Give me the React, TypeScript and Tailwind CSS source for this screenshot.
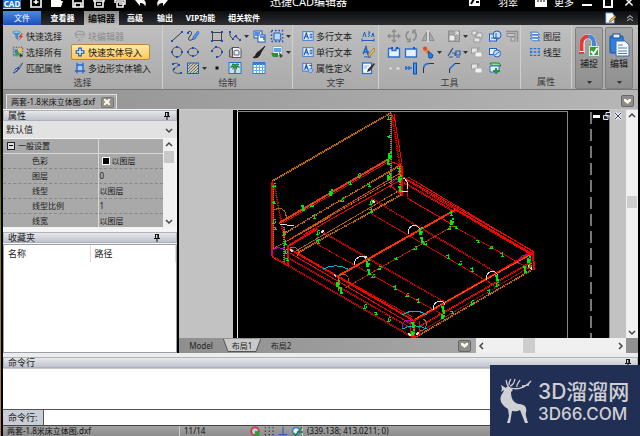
import type { ReactNode } from "react";

const BLUE = "#1f5fc4";
const GREY = "#8d8d8d";

function Svg({ children, size = "w-[14px] h-[14px]" }: { children: ReactNode; size?: string }) {
  return (
    <svg viewBox="0 0 14 14" className={`${size} shrink-0`} fill="none" aria-hidden="true">
      {children}
    </svg>
  );
}

function Caret() {
  return (
    <svg viewBox="0 0 5 3" className="h-[3px] w-[5px] shrink-0" aria-hidden="true">
      <path d="M0 0h5L2.5 3z" fill="#333" />
    </svg>
  );
}

function Dots({ pts }: { pts: number[][] }) {
  return (
    <>
      {pts.map(([x, y]) => (
        <rect key={`${x}-${y}`} x={x - 1} y={y - 1} width="2" height="2" fill="#1550c8" />
      ))}
    </>
  );
}

const icons: Record<string, ReactNode> = {
  quick: (
    <>
      <path d="M1 2.500h8.500L6.500 6v5L4.500 9V6z" fill="#3aa0dc" stroke="#1566a8" strokeWidth=".7" />
      <ellipse cx="5.200" cy="2.500" rx="4.200" ry="1.300" fill="#9fd8f5" stroke="#1566a8" strokeWidth=".6" />
      <path d="M11 4 7.500 8.500H10L7 13l6-6h-2.300L13 4z" fill="#e8322c" />
    </>
  ),
  all: (
    <>
      <rect x="1.500" y="1.500" width="11" height="10" stroke="#444" strokeDasharray="1.500 1.500" />
      <rect x="3" y="4" width="5" height="4" fill="#2d74d8" />
      <circle cx="9" cy="5" r="2.300" fill="#f4c430" />
      <path d="m2 11 4-5 4 5z" fill="#2fa336" />
      <path d="m9 8 4 4h-2l-1 2z" fill="#222" />
    </>
  ),
  match: (
    <>
      <path d="m12.500 1-5 5 1.500 1.500z" fill="#8fb8ea" stroke="#27477c" strokeWidth=".8" />
      <path d="M7.500 5.500 9 7.500 6 11l-3.500 2H1l3-5z" fill="#234a93" />
      <path d="M3 11.500 6 8" stroke="#e8eefb" />
    </>
  ),
  block: (
    <>
      <path d="M1 4 4 1.500h6L12 4l-3 1.500H4z" fill="#b8b8b8" stroke={GREY} />
      <path d="m12.500 5-6 5L5 12.500l3-1L13 6z" fill="#ddd" stroke={GREY} />
      <path d="M2 5v3l3 1" stroke={GREY} />
    </>
  ),
  plus: <path d="M5.500 2.500h3v3h3v3h-3v3h-3v-3h-3v-3h3z" fill="#dff0ff" stroke="#1d56ae" strokeWidth="1.300" />,
  poly: (
    <>
      <path d="M4 4h6v6H4z" fill="#aacdf4" />
      <path d="M3.500 1v12M1 10.500h12M10.500 1v12M4 3.500h6" stroke="#1d64cf" strokeWidth="1.500" />
    </>
  ),
  line: (
    <>
      <path d="M2 12 12 3" stroke="#333" />
      <Dots pts={[[2, 12], [12, 3]]} />
    </>
  ),
  sketch: (
    <>
      <path d="M1 4c4-4 6 0 3 3s-1 6 3 3" stroke="#333" />
      <path d="m12 2-5 6v2.500L9 10l4-6z" fill="#4f97ec" stroke="#1a56b2" strokeWidth=".6" />
      <Dots pts={[[2, 4]]} />
    </>
  ),
  rect: (
    <>
      <rect x="2.500" y="3.500" width="9" height="8" stroke="#444" />
      <Dots pts={[[2, 3], [12, 3], [2, 12], [12, 12]]} />
    </>
  ),
  polyline: (
    <>
      <path d="M2 3v4l3 3 2-3 5 4" stroke="#444" />
      <Dots pts={[[2, 3], [5, 10], [8, 7], [12, 11]]} />
    </>
  ),
  insert: (
    <>
      <rect x="2" y="2" width="8" height="7" fill="#d8eaff" stroke={BLUE} />
      <rect x="6" y="6" width="7" height="7" fill="#fff" stroke={BLUE} />
      <path d="M3 4h5M3 6h3M8 8h4v3" stroke="#2670d4" strokeWidth="1.500" />
    </>
  ),
  region: (
    <>
      <path d="M4 4h6c2 3-1 3 1 7H4z" fill="#b8d9fa" stroke={BLUE} />
      <rect x="1.500" y="1.500" width="11" height="11" stroke="#1550c8" strokeWidth="1.500" strokeDasharray="1.500 2" />
    </>
  ),
  circle: (
    <>
      <circle cx="7" cy="7" r="5" stroke="#555" />
      <Dots pts={[[7, 2], [2, 7], [12, 7], [7, 12]]} />
    </>
  ),
  ellipse: (
    <>
      <ellipse cx="7" cy="7" rx="5" ry="4" stroke="#555" />
      <Dots pts={[[7, 3], [2, 7], [12, 7], [7, 11]]} />
    </>
  ),
  arc: (
    <>
      <path d="M2 6c1-5 9-5 10 0 0 3-2 6-5 6" stroke="#555" />
      <Dots pts={[[2, 6], [6, 2], [12, 7], [7, 12]]} />
    </>
  ),
  wipe: (
    <>
      <path d="M4 2.500h7l2 2v8H4z" fill="#eef4ff" stroke="#555" />
      <path d="M1.500 12V5l3-2v9z" fill="#aaa" stroke="#555" />
      <path d="M6 10V6l3-1 2 1v4z" stroke="#666" />
    </>
  ),
  brush: <path d="M13 1 7 6.500l1.500 1.500zM7 6.500C3 8 5 11 1 12.500c4 1 7-1 7.500-4.500z" fill="#222" stroke="#222" />,
  picture: (
    <>
      <rect x="3" y="1.500" width="9" height="9" fill="#fff" stroke="#8aa" />
      <rect x="4" y="3" width="7" height="4" fill="#5aa6ee" />
      <path d="M1 8h7v4H3z" fill="#2c8f35" />
      <path d="m9 7 4 4-3 2z" fill="#444" />
    </>
  ),
  spline: (
    <>
      <path d="M3 3c7-3 6 3 2 4s-2 7 7 5" stroke="#555" />
      <Dots pts={[[3, 3], [9, 4], [4, 8], [11, 12]]} />
    </>
  ),
  hatch: (
    <>
      <rect x="1.500" y="2" width="11" height="10.500" fill="#c9c3b4" stroke="#1f5fc4" />
      <path d="m2 5 3-3M2 8l6-6M2 11l9-9M4 12l8-8M7 12l5-5M10 12l2-2" stroke="#555" strokeWidth=".8" />
    </>
  ),
  point: <rect x="5.500" y="5.500" width="3" height="3" fill="#111" />,
  palm: (
    <>
      <rect x="1" y="1.500" width="12" height="11" fill="#bfe4fa" stroke="#2474c8" />
      <path d="M7 6v6" stroke="#7b4a1d" strokeWidth="1.300" />
      <path d="M7 6C5 3 3 4 2 7l3-1-1 3 3-3 2 3v-3l3 1c-1-3-3-4-5-1z" fill="#128334" />
      <path d="M4 3.500c2-1 3 1 3 2 0-2 2-3 4-2" stroke="#128334" strokeWidth="1.300" />
    </>
  ),
  table: (
    <>
      <rect x="1" y="1.500" width="12" height="11" fill="#fff" stroke="#2e7fd8" />
      <path d="M1 3h12" stroke="#2e7fd8" strokeWidth="2" />
      <path d="M1 6.500h12M1 9.500h12M4.500 3v9M7.500 3v9M10.500 3v9" stroke="#6cacf0" />
    </>
  ),
  mtext: (
    <>
      <rect x="1" y="2" width="12" height="10" fill="#e3efff" stroke="#2c6fd0" />
      <path d="m2.500 10.500 2.500-7 2.500 7M4 8h2.500M9 5h3M9 7h3M9 9h3" stroke="#174fa8" strokeWidth="1.200" />
    </>
  ),
  attr: (
    <>
      <rect x="1" y="1.500" width="10" height="9" fill="#e3efff" stroke="#2c6fd0" />
      <path d="m3 9 2-6 2 6M4 7h2.500M8.500 4H11" stroke="#174fa8" strokeWidth="1.200" />
      <circle cx="10" cy="10" r="2.500" fill="#9fc3f5" stroke="#1f5fc4" strokeDasharray="1.200 .8" />
    </>
  ),
  fit: (
    <>
      <path d="M1 11.500h12M1 9.500v3M13 9.500v3" stroke="#1f5fc4" />
      <path d="m2 8 1.500-5L5 8M7 3h2L7.500 5.500C9 5 9 8 7 7.500M10.500 8 12 4l1 4" stroke="#1f5fc4" />
    </>
  ),
  style: (
    <>
      <path d="m2 9 3-7 2 8M3 7h5" stroke="#1f5fc4" strokeWidth="1.500" />
      <path d="m13 3-5 6-1 3 2-1 5-6z" fill="#f5c24a" stroke="#7b5a16" strokeWidth=".6" />
      <path d="M3 12c3-1 4 1 7 0" stroke="#1f5fc4" />
    </>
  ),
  edit: (
    <>
      <rect x="1.500" y="2" width="9" height="10.500" fill="#fff" stroke="#2c6fd0" strokeWidth="1.300" />
      <path d="M3 5h5M3 7h3" stroke="#7fb0ef" />
      <path d="m13 2-6 6-1 3 3-1 5-7z" fill="#333" />
    </>
  ),
  move: <path d="M7 1v12M1 7h12M5 3l2-2 2 2M5 11l2 2 2-2M3 5 1 7l2 2M11 5l2 2-2 2" stroke={GREY} strokeWidth="1.300" />,
  rotate: (
    <>
      <path d="M5 2.500C1 4 1 10 6 11.500M9 11.500c4-2 4-7 1-9" stroke={GREY} strokeWidth="1.600" />
      <path d="M6 9v3.500H3M9 5V1.500h3" stroke={GREY} strokeWidth="1.300" />
    </>
  ),
  mirror: (
    <>
      <path d="M5.500 3v8.500H1zM8.500 3v8.500H13z" fill="#aaa" stroke={GREY} />
      <path d="M7 1v12" stroke="#eee" />
    </>
  ),
  scale: (
    <>
      <rect x="1.500" y="2" width="11" height="10.500" fill="#aaa" stroke={GREY} />
      <rect x="2" y="6" width="6" height="6" fill="#eee" stroke={GREY} />
      <path d="m8 6 3-3M8 3h3v3" stroke="#eee" />
    </>
  ),
  group: <path d="M2 2h5v4H2zM6 4h6v5H6zM4 8h6v5H4z" fill="#e4e4e4" stroke="#999" />,
  bring: (
    <>
      <rect x="1.500" y="3" width="6" height="5" fill="#e4e4e4" stroke="#999" />
      <rect x="5" y="7" width="7" height="5" fill="#f2f2f2" stroke="#aaa" />
      <path d="M9 2v3" stroke="#999" />
    </>
  ),
  explode: (
    <>
      <rect x="1.500" y="5" width="7" height="7" fill="#d8e9ff" stroke={BLUE} />
      <circle cx="9" cy="6" r="4" fill="#c7defa" stroke={BLUE} />
      <path d="M3 9h8M8 4v6" stroke={BLUE} />
    </>
  ),
  clip: (
    <>
      <rect x="1.500" y="3.500" width="7" height="6" fill="#e6f1ff" stroke={BLUE} />
      <circle cx="9" cy="8.500" r="3.500" fill="#cfe2fa" stroke={BLUE} />
      <path d="m7 10 4-3" stroke={BLUE} />
    </>
  ),
  align: (
    <>
      <path d="M1 2.500h12M12.500 2v11" stroke={GREY} strokeWidth="1.300" />
      <path d="M2 4.500h8v3H2zM6 8h4v4H6z" fill="#c5c5c5" stroke={GREY} />
    </>
  ),
  joinA: (
    <>
      <path d="M1.500 3.500H5v2h4v-2h3.500V12h-11z" fill="#e6f1ff" stroke="#2c6fd0" strokeWidth="1.400" />
      <Dots pts={[[5, 3], [10, 3]]} />
    </>
  ),
  joinB: (
    <>
      <path d="M1.500 4h11v8h-11z" fill="#e6f1ff" stroke="#2c6fd0" strokeWidth="1.400" />
      <Dots pts={[[10, 3]]} />
    </>
  ),
  paint: (
    <>
      <path d="m2 5 3-3 4 4-3 3z" fill="#f28b2d" />
      <circle cx="4" cy="3.500" r="2" fill="#d94a28" />
      <path d="m7 6 5 4-1 3H8z" fill="#2d7be0" stroke="#174fa8" />
    </>
  ),
  text: (
    <>
      <path d="M1 11 6 3M2 12h4M5 8h3v3M9 6h4v4H9zM9 12h4" stroke="#2c5fb4" strokeWidth="1.200" />
      <path d="m2 10 3-6" stroke="#555" />
    </>
  ),
  breakA: (
    <>
      <rect x="2" y="6" width="3" height="3" fill="#ddd" stroke="#aaa" strokeWidth=".6" />
      <rect x="9" y="6" width="4" height="3" fill="#ddd" stroke="#aaa" strokeWidth=".6" />
    </>
  ),
  extend: (
    <>
      <path d="M1 7h7M2 5v4M5 5v4" stroke="#2c6fd0" strokeWidth="1.500" />
      <rect x="9.500" y="2" width="3" height="11" fill="#3e95f2" stroke="#1550a8" />
    </>
  ),
  fillet: (
    <>
      <path d="M2.500 12V7C3 4 5 2.500 8 2.500h5" stroke="#333" />
      <path d="M2.500 7C3 4 5 2.500 8 2.500" stroke="#2474dc" strokeWidth="1.600" />
    </>
  ),
  chamfer: (
    <>
      <path d="M2.500 12V8L8 2.500h5" stroke="#333" />
      <path d="M2.500 8 8 2.500" stroke="#2474dc" strokeWidth="1.600" />
    </>
  ),
  green: (
    <>
      <path d="M2 2h9l2 3H4z" fill="#93dc8e" stroke="#1c8430" />
      <path d="M2 5h9v6H2z" fill="#eaf4ff" stroke="#2c6fd0" />
      <path d="M8 7v6M5 10h7" stroke="#1c9a38" strokeWidth="2" />
    </>
  ),
  layers: <path d="M1.500 2.500h8l3 3h-8zM1.500 6h8l3 3h-8zM1.500 9.500h8l3 3h-8z" fill="#edf5ff" stroke="#2c6fd0" />,
  ltype: (
    <>
      <path d="M1 3h12M1 7h12M1 11h12" stroke="#2474dc" strokeWidth="1.600" strokeDasharray="3 1.500" />
      <path d="M2 3v8M12 3v8" stroke="#2474dc" strokeDasharray="1 1" />
    </>
  ),
  pen: (
    <>
      <path d="M2 1h8l2 3v9H2z" fill="#fff" stroke="#356fc4" />
      <path d="m13 4-6 5-1 3 3-1 5-5z" fill="#f2b43c" stroke="#444" strokeWidth=".6" />
    </>
  ),
};

function Tool({ name, label, caret = false }: { name: string; label: string; caret?: boolean }) {
  return (
    <button type="button" aria-label={label} className="flex h-4 items-center gap-0.5 pl-0.5">
      <Svg>{icons[name]}</Svg>
      {caret && <Caret />}
    </button>
  );
}

function TextTool({ name, label, look = "border-transparent text-[#222]" }: { name: string; label: string; look?: string }) {
  return (
    <button type="button" className={`flex h-4 items-center gap-0.5 whitespace-nowrap rounded-[2px] border pl-0.5 ${look}`}>
      <Svg size="w-[12px] h-[12px]">{icons[name]}</Svg>
      {label}
    </button>
  );
}

function Group({ title, width, children }: { title: string; width: string; children: ReactNode }) {
  return (
    <section aria-label={title} className={`flex shrink-0 flex-col border-r border-[#d0d0d0] pt-[3px] ${width}`}>
      <div className="flex h-12">{children}</div>
      <h2 className="text-center leading-[14px] text-[#3a3a3a]">{title}</h2>
    </section>
  );
}

type T = [string, string, boolean?];
const drawTools: (T | null)[] = [
  ["line", "直线"], ["sketch", "手绘"], ["rect", "矩形"], ["polyline", "多段线", true], ["insert", "插入块"], ["region", "面域", true],
  ["circle", "圆"], ["ellipse", "椭圆"], ["arc", "圆弧"], ["wipe", "遮罩"], ["brush", "画笔"], ["picture", "图片", true],
  ["spline", "样条曲线"], ["hatch", "填充", true], ["point", "点"], ["palm", "图像"], ["table", "表格"], null,
];
const editTools: (T | null)[] = [
  ["move", "移动"], ["rotate", "旋转"], ["mirror", "镜像"], ["scale", "缩放", true], ["group", "成组"], ["explode", "分解"], ["align", "对齐"],
  ["joinA", "打断"], ["joinB", "合并"], ["paint", "格式刷", true], ["text", "文字", true], ["bring", "前置"], ["clip", "剪裁"], null,
  ["breakA", "断点"], ["extend", "延伸"], ["fillet", "圆角"], ["chamfer", "倒角"], ["bring", "后置"], ["green", "输出块"], null,
];

function ToolGrid({ tools, cols }: { tools: (T | null)[]; cols: string }) {
  return (
    <div className={`grid grid-rows-3 ${cols}`}>
      {tools.map((t, i) => (t ? <Tool key={i} name={t[0]} label={t[1]} caret={t[2]} /> : <span key={i} />))}
    </div>
  );
}

function TitleBar() {
  return (
    <header className="flex h-[11px] shrink-0 items-start justify-between overflow-hidden bg-black text-white">
      <div className="flex h-[9px] items-end gap-[7px] overflow-hidden">
        <span className="mr-px flex h-[9px] w-[18px] items-center justify-center border-b border-[#cde] bg-[#1b6fd0] text-[8px] font-bold leading-[8px]">
          CAD
        </span>
        {[
          ["新建", <path key="p" d="M2 2h10v10H2zM7 4v5M4.500 7h5" stroke="#fff" strokeWidth="1.600" />],
          ["打开", <path key="p" d="M1 12V2h4l1 2h5v2h2l-2 6z" fill="#fff" />],
          ["保存", <path key="p" d="M2 1v11h10V1M4 12V8h6v4" stroke="#fff" strokeWidth="1.600" />],
          ["另存为", <path key="p" d="M2 2v4h10V2M3 6v6h8V6M5 9h4" stroke="#fff" strokeWidth="1.600" />],
          ["打印", <path key="p" d="M2 8V5h10v4h-2M4 7h6v5H4zM6 9h3" stroke="#fff" strokeWidth="1.500" />],
          ["撤销", <path key="p" d="m1 5 5-4v3c5 0 7 3 5 8 0-3-2-4-5-4v3z" fill="#fff" />],
          ["重做", <path key="p" d="m13 5-5-4v3c-5 0-7 3-5 8 0-3 2-4 5-4v3z" fill="#fff" />],
        ].map(([label, art]) => (
          <button key={label as string} type="button" aria-label={label as string} className="shrink-0">
            <Svg>{art}</Svg>
          </button>
        ))}
      </div>
      <h1 className="-mt-[4px] whitespace-nowrap pr-5 text-[11px] leading-[12px]">迅捷CAD编辑器</h1>
      <div className="flex h-[8px] items-end gap-2 overflow-hidden pr-1 text-[10px] leading-[12px]">
        <span className="mr-2">
          <Svg>
            <path d="M1 1h11v11H1z" fill="#fff" />
            <path d="M3 10 6 5M8 8h3" stroke="#000" strokeWidth="2" />
          </Svg>
        </span>
        <span className="mr-2">羽翠</span>
        <span className="flex items-end gap-1.5">
          <Svg>
            <path d="M1 1h12v12H1z" fill="#fff" />
            <path d="M4 6v2M7 6v2M10 6v2" stroke="#000" />
          </Svg>
          更多
        </span>
        <span className="flex h-[8px] items-end gap-[11px]">
          <button type="button" aria-label="最小化" className="h-1 w-[10px] self-center border-b-2 border-white" />
          <button type="button" aria-label="最大化" className="h-[10px] w-[10px] border-2 border-white" />
          <button type="button" aria-label="关闭">
            <Svg size="w-[10px] h-[12px]">
              <path d="m2 2 10 10M12 2 2 12" stroke="#fff" strokeWidth="2" />
            </Svg>
          </button>
        </span>
      </div>
    </header>
  );
}

function MenuTabs() {
  const tab = "h-full whitespace-nowrap text-white";
  return (
    <nav className="flex h-[14px] shrink-0 items-center bg-gradient-to-b from-[#0c0d0f] to-[#2d2f33] text-[8px] font-bold leading-none">
      <button type="button" className="h-full w-[38px] bg-gradient-to-b from-[#4b8ae8] to-[#1a4fb5] font-normal text-white">文件</button>
      <button type="button" className={`${tab} w-[43px]`}>查看器</button>
      <button type="button" aria-current="page" className="h-full w-[35px] whitespace-nowrap bg-gradient-to-b from-[#8a8a8a] to-[#bdbdbd] text-[9px] text-[#111]">编辑器</button>
      <button type="button" className={`${tab} w-8`}>高级</button>
      <button type="button" className={`${tab} w-7`}>输出</button>
      <button type="button" className={`${tab} w-[43px]`}>VIP功能</button>
      <button type="button" className={`${tab} w-11`}>相关软件</button>
      <div className="ml-auto flex items-center gap-1 pr-1">
        <button type="button" aria-label="主题">
          <Svg size="w-[12px] h-[12px]">{icons.pen}</Svg>
        </button>
        <button type="button" aria-label="折叠功能区" className="pl-1.5">
          <Svg size="w-[8px] h-[8px]">
            <path d="m2 7 5-4 5 4M2 12l5-4 5 4" stroke="#aaa" strokeWidth="1.800" />
          </Svg>
        </button>
      </div>
    </nav>
  );
}

function BigButton({ label, children }: { label: string; children: ReactNode }) {
  return (
    <button type="button" className="flex h-[62px] w-7 shrink-0 flex-col items-center rounded-[2px] border border-[#7f7f7f] bg-gradient-to-b from-[#a6a6a6] to-[#8f8f8f] pt-[5px] text-[#111]">
      <svg viewBox="0 0 22 24" className="h-6 w-[22px]" fill="none" aria-hidden="true">{children}</svg>
      <span className="leading-[14px]">{label}</span>
      <span className="mt-auto pb-1"><Caret /></span>
    </button>
  );
}

function Ribbon() {
  return (
    <div className="flex h-[65px] shrink-0 overflow-hidden border-b border-[#777] bg-gradient-to-b from-[#bfbfbf] to-[#aaaaaa] text-[9px] leading-none">
      <Group title="选择" width="w-[160px]">
        <div className="flex w-[68px] flex-col pl-[6px]">
          <TextTool name="quick" label="快速选择" />
          <TextTool name="all" label="选择所有" />
          <TextTool name="match" label="匹配属性" />
        </div>
        <div className="flex w-[79px] flex-col">
          <TextTool name="block" label="块编辑器" look="border-transparent text-[#8a8a8a]" />
          <TextTool name="plus" label="快速实体导入" look="border-[#b98a2f] bg-gradient-to-b from-[#ffe9a8] to-[#fdc756] text-[#111]" />
          <TextTool name="poly" label="多边形实体输入" />
        </div>
      </Group>
      <Group title="绘制" width="w-[130px]">
        <div className="pl-[5px]">
          <ToolGrid tools={drawTools} cols="grid-cols-[16px_24px_18px_24px_18px_22px]" />
        </div>
      </Group>
      <Group title="文字" width="w-[86px]">
        <div className="flex w-[66px] flex-col pl-[6px]">
          <TextTool name="mtext" label="多行文本" />
          <TextTool name="mtext" label="单行文本" />
          <TextTool name="attr" label="属性定义" />
        </div>
        <div className="flex flex-col">
          <Tool name="fit" label="文字宽度" />
          <Tool name="style" label="文字样式" />
          <Tool name="edit" label="编辑文字" />
        </div>
      </Group>
      <Group title="工具" width="w-[142px]">
        <div className="pl-[6px]">
          <ToolGrid tools={editTools} cols="grid-cols-[17px_17px_26px_23px_18px_17px_16px]" />
        </div>
      </Group>
      <Group title="属性" width="w-[51px]">
        <div className="flex flex-col pl-[5px]">
          <TextTool name="layers" label="图层" />
          <TextTool name="ltype" label="线型" />
        </div>
      </Group>
      <div className="flex gap-0.5 pl-[3px] pt-0.5">
        <BigButton label="捕捉">
          <path d="M4 20V11C4 1 16 1 16 11v7" stroke="#fff" strokeWidth="5" />
          <path d="M3.500 18V11c0-5 3-7.500 6.500-7.500" stroke="#e23b3b" strokeWidth="4" />
          <path d="M10 3.500c4 0 6 3 6 7.500v5" stroke="#4a86d8" strokeWidth="4" />
          <path d="M1 20h5" stroke="#e23b3b" strokeWidth="2" />
          <rect x="11.500" y="13.500" width="9" height="9" fill="#2f9e34" stroke="#d5f0d5" />
          <path d="m13 18 2.500 3 4-6" stroke="#fff" strokeWidth="2" />
        </BigButton>
        <BigButton label="编辑">
          <rect x="2" y="3" width="13" height="17" rx="1" fill="#3380dc" stroke="#174f9f" />
          <rect x="5" y="1" width="7" height="4" fill="#e8f1fc" stroke="#174f9f" />
          <path d="M8 8h9l4 4v11H8z" fill="#f7fbff" stroke="#3b6fb5" />
          <path d="M10 12h5M10 15h9M10 18h9M10 20.500h9" stroke="#5b7ca8" />
        </BigButton>
      </div>
    </div>
  );
}

function Chevron({ label }: { label: string }) {
  return (
    <button type="button" aria-label={label} className="flex h-3 w-[13px] shrink-0 items-center justify-center rounded-[2px] border border-[#666] bg-[#8c8c8c]">
      <svg viewBox="0 0 7 5" className="h-[5px] w-[7px]" aria-hidden="true">
        <path d="M0 0h2l1.500 1.500L5 0h2v2L3.500 5 0 2z" fill="#fffbe0" />
      </svg>
    </button>
  );
}

function Pin() {
  return (
    <button type="button" aria-label="固定面板">
      <svg viewBox="0 0 6 8" className="h-2 w-1.5" aria-hidden="true">
        <path d="M1 .5h4M1.500 .5v4M4.500 .5v4M3.800 .5v4M0 4.500h6M3 5v3" stroke="#111" fill="none" />
      </svg>
    </button>
  );
}

function PanelHead({ title, pad = "pr-1.5" }: { title: string; pad?: string }) {
  return (
    <div className={`flex h-[11px] shrink-0 items-center justify-between border border-[#aeb2ba] bg-gradient-to-b from-[#e6e8ec] to-[#bfc3cb] pl-1 leading-none ${pad}`}>
      <h2>{title}</h2>
      <Pin />
    </div>
  );
}

const ARROWS = {
  up: "m1 5 3-3 3 3",
  down: "m1 3 3 3 3-3",
  left: "M5 1 2 4l3 3",
  right: "m3 1 3 3-3 3",
};

function Arrow({ dir }: { dir: keyof typeof ARROWS }) {
  return (
    <svg viewBox="0 0 8 8" className="h-2 w-2 shrink-0" fill="none" aria-hidden="true">
      <path d={ARROWS[dir]} stroke="#444" strokeWidth="1.500" />
    </svg>
  );
}

const props: [string, string][] = [
  ["色彩", "以图层"],
  ["图层", "0"],
  ["线型", "以图层"],
  ["线型比例", "1"],
  ["线宽", "以图层"],
];

function SidePanels() {
  return (
    <aside className="flex w-[174px] shrink-0 flex-col bg-[#f4f4f4] text-[9px] leading-none text-[#1b1b1b]">
      <div className="flex h-[118px] shrink-0 flex-col pt-px">
        <PanelHead title="属性" />
        <div className="flex h-[18px] items-center border-b border-[#f4f4f4] bg-[#e2e2e2] pr-1">
          <label htmlFor="preset" className="sr-only">预设</label>
          <select id="preset" className="min-w-0 flex-1 appearance-none bg-transparent pl-[3px] leading-none">
            <option>默认值</option>
          </select>
          <Arrow dir="down" />
        </div>
        <div className="flex min-h-0 flex-1">
          <div className="min-w-0 flex-1 overflow-hidden bg-[#a9a9a9]">
            <table className="w-full table-fixed border-collapse text-[8px]">
              <thead>
                <tr className="h-[14px] border-b border-[#d8d8d8]">
                  <th scope="col" className="w-[95px] border-r border-[#d8d8d8] pl-1 text-left font-normal">
                    <span className="flex items-center gap-[3px]">
                      <span className="flex h-2 w-2 items-center border border-[#222] bg-[#ddd] px-px">
                        <span className="h-px w-full bg-black" />
                      </span>
                      一般设置
                    </span>
                  </th>
                  <th scope="col" aria-label="值" />
                </tr>
              </thead>
              <tbody>
                {props.map(([k, v], i) => (
                  <tr key={k} className="h-[15px] border-b border-dashed border-[#888]">
                    <th scope="row" className="border-r border-solid border-[#d8d8d8] pl-[29px] text-left font-normal">{k}</th>
                    <td className="pl-px">
                      <span className="flex items-center gap-0.5">
                        {i === 0 && <span className="ml-0.5 h-2 w-2 border border-white bg-black" />}
                        {v}
                      </span>
                    </td>
                  </tr>
                ))}
              </tbody>
            </table>
          </div>
          <div className="mr-0.5 flex w-3 flex-col items-center justify-between bg-[#f0f0f0] py-0.5">
            <Arrow dir="up" />
            <span className="mb-auto mt-0.5 h-3 w-[10px] bg-[#c8c8c8]" />
            <Arrow dir="down" />
          </div>
        </div>
      </div>
      <div className="flex min-h-0 flex-1 flex-col pt-[5px]">
        <PanelHead title="收藏夹" pad="pr-4" />
        <div className="mt-px flex-1 border border-[#9a9fa8] bg-white">
          <table className="w-full table-fixed">
            <thead>
              <tr className="h-[17px] text-left">
                <th scope="col" className="w-[86px] border-r border-[#ddd] pl-1 font-normal">名称</th>
                <th scope="col" className="border-r border-[#ddd] pl-1 font-normal">路径</th>
              </tr>
            </thead>
          </table>
        </div>
      </div>
    </aside>
  );
}

/* x1, y1, x2, y2, colour, width */
const R = "#f80000";
const D = "#c80404";
const O = "#d07010";
type Line = [number, number, number, number, string, number];
const solid: Line[] = [
  [272, 180, 272, 256, R, 1], [271, 181, 271, 255, R, 1],
  [394, 113, 402, 163, R, 1], [391, 112, 396, 122, R, 1],
  [279, 222, 387, 159, "#e63a08", 2], [290, 238, 402, 171, "#d04a08", 1],
  [303, 234, 402, 178, R, 1], [288, 245, 317, 228, R, 2],
  [387, 159, 402, 165, R, 1], [402, 165, 402, 195, R, 2], [391, 185, 402, 194, R, 1],
  [407, 178, 408, 196, R, 1], [403, 176, 533, 250, R, 1], [408, 176, 534, 251, R, 1],
  [453, 207, 532, 253, R, 2], [407, 197, 453, 224, R, 1],
  [455, 209, 338, 275, "#ff3000", 2], [338, 275, 338, 290, O, 1],
  [288, 247, 413, 319, R, 2], [290, 252, 411, 323, R, 1],
  [272, 256, 288, 265, R, 1], [288, 244, 288, 265, R, 2],
  [413, 320, 533, 251, R, 2], [415, 318, 530, 254, "#ff5a00", 1],
  [533, 250, 534, 269, R, 2], [530, 254, 530, 268, R, 1],
  [410, 320, 410, 334, R, 1], [414, 320, 414, 337, R, 2], [419, 320, 419, 333, R, 1],
  [410, 334, 414, 337, R, 1], [414, 337, 421, 332, R, 1],
  [497, 272, 497, 286, R, 1], [443, 299, 443, 313, R, 1],
];
const dotted: Line[] = [
  [272, 180, 391, 112, O, 2], [391, 112, 391, 185, O, 2], [273, 182, 273, 247, O, 1],
  [274, 182, 284, 236, D, 2], [392, 115, 400, 165, D, 2],
  [283, 222, 388, 161, R, 1], [283, 233, 401, 164, O, 2], [287, 240, 402, 174, O, 1],
  [273, 248, 330, 216, O, 1], [297, 252, 403, 193, O, 2], [296, 250, 400, 189, O, 1],
  [400, 165, 400, 193, O, 2], [405, 178, 533, 255, R, 2], [404, 182, 455, 211, R, 2],
  [453, 225, 530, 268, R, 1], [372, 198, 497, 272, D, 2], [372, 213, 497, 286, R, 1],
  [322, 231, 443, 300, D, 2], [317, 243, 443, 314, R, 1],
  [453, 225, 345, 287, "#e83808", 1], [290, 258, 411, 327, D, 2],
  [273, 256, 412, 336, D, 2], [292, 250, 413, 316, R, 1],
  [418, 326, 530, 262, R, 2], [417, 335, 533, 268, O, 2], [420, 331, 530, 266, D, 1],
  [284, 226, 284, 263, O, 2], [371, 198, 371, 213, R, 1], [317, 228, 317, 243, R, 1],
];
const greens: [number, number, number][] = [
  [274, 184, 3], [274, 201, 2], [274, 220, 4], [275, 227, 3], [284, 232, 4], [285, 241, 4], [286, 250, 4], [287, 258, 3],
  [389, 116, 4], [389, 135, 2], [390, 154, 6], [388, 160, 5], [389, 175, 5], [399, 168, 4], [400, 177, 5], [400, 187, 5],
  [359, 174, 4], [350, 182, 3], [331, 191, 5], [303, 206, 5], [312, 204, 3], [369, 184, 3], [342, 199, 3], [314, 215, 4],
  [371, 201, 4], [371, 209, 4], [318, 231, 4], [318, 240, 4], [421, 230, 6], [422, 238, 5], [425, 242, 3], [451, 212, 4],
  [452, 220, 5], [456, 226, 3], [449, 227, 3], [478, 240, 3], [491, 246, 2], [502, 253, 4], [415, 247, 3], [396, 257, 2],
  [379, 267, 3], [448, 255, 4], [460, 262, 3], [472, 268, 4], [368, 262, 6], [369, 270, 5], [373, 275, 3], [395, 286, 4],
  [407, 294, 3], [418, 299, 4], [338, 282, 5], [341, 289, 6], [365, 305, 4], [376, 312, 3], [389, 318, 4], [497, 276, 5],
  [497, 283, 4], [489, 290, 4], [472, 301, 4], [443, 307, 5], [443, 314, 5], [452, 311, 3], [529, 258, 5], [525, 268, 6],
  [530, 264, 4], [413, 323, 5], [413, 331, 5],
];

function Drawing() {
  return (
    <svg viewBox="179 109 447 229" preserveAspectRatio="xMinYMin slice" className="block h-full w-full" role="img" aria-label="床立体图" shapeRendering="crispEdges" fill="none">
      <rect x="233" y="109" width="376" height="229" fill="#000" />
      <path d="M237.500 109v229" stroke="#e4e4e4" />
      <path d="M237 110.500h330.500V338M609.500 109v229" stroke="#858585" />
      <path d="M591 111v227" stroke="#777" strokeWidth="2" strokeDasharray="12 5" />
      {dotted.map(([a, b, c, d, col, w], i) => (
        <g key={i} stroke={col}>
          <path d={`M${a} ${b}L${c} ${d}`} strokeOpacity=".55" />
          <path d={`M${a} ${b}L${c} ${d}`} strokeWidth={w} strokeDasharray="1 1" />
        </g>
      ))}
      {solid.map(([a, b, c, d, col, w], i) => (
        <path key={i} d={`M${a} ${b}L${c} ${d}`} stroke={col} strokeWidth={w} />
      ))}
      <g stroke="#ddd">
        <path d="M408 233c0-10 10-11 12-4M354 264c0-8 9-11 12-6M486 279c0-10 10-11 12-4M433 309c0-10 10-11 12-5M403 177c3 1 5 5 5 11M280 223l14 2M402 190h6" />
        <path d="M372 200l3 1M321 231l3-1M290 249l3 1M334 274l2 1M528 265l4 3M408 333l3 1M416 333l3-1M364 256h3" strokeWidth="2" />
      </g>
      <path d="M274 209c8-4 13 1 12 9M290 247c7-3 10 3 7 8M338 278c0-8 12-6 11 4M420 330c8-2 8-9 3-12" stroke="#b86410" />
      <path d="M271 255c0-9 8-9 13-7M390 187c2-8 6-10 12-9M402 327c0-8 6-9 10-7M518 263c1-7 5-10 10-9" stroke="#b000c0" />
      <path d="M323 268c8-4 17-4 25 0M402 314c8-5 17-5 25 0M402 328c8-4 17-4 25 0" stroke="#00b8c8" />
      {greens.map(([x, y, s], i) => (
        <path
          key={i}
          d={
            i % 2
              ? `M${x - 2} ${y - s / 2 + 1}h3M${x} ${y - s / 2}v${s}M${x - 1} ${y + s / 2}h3`
              : `M${x} ${y - s / 2}h2M${x - 1} ${y - s / 2 + 1}v${s - 1}M${x + 1} ${y}v2M${x - 2} ${y + s / 2}h3`
          }
          stroke="#00e810"
          strokeWidth={s > 4 ? 2 : 1}
        />
      ))}
    </svg>
  );
}

function Workspace() {
  return (
    <main className="ml-0.5 flex min-w-0 flex-1 flex-col bg-[#c2c2c2]">
      <div className="flex min-h-0 flex-1 border-t border-[#ccc]">
        <div className="relative min-w-0 flex-1 overflow-hidden">
          <Drawing />
          <div className="absolute right-1 top-0.5 flex items-center gap-[3px]">
            <button type="button" aria-label="最小化图纸" className="h-[3px] w-[7px] bg-white" />
            <button type="button" aria-label="还原图纸">
              <svg viewBox="0 0 8 8" className="h-2 w-2" aria-hidden="true">
                <path d="M3 .5h4.500V4H3zM.5 3.500H5v4H.5z" fill="#223" stroke="#dfe6ee" />
              </svg>
            </button>
            <button type="button" aria-label="关闭图纸">
              <svg viewBox="0 0 8 8" className="h-2 w-2" aria-hidden="true">
                <path d="m1 1 6 6M7 1 1 7" stroke="#e9eef4" strokeWidth="3" />
                <path d="m1 1 6 6M7 1 1 7" stroke="#445" />
              </svg>
            </button>
          </div>
        </div>
        <div className="flex w-3 shrink-0 flex-col items-center bg-[#f0f0f0] py-0.5">
          <Arrow dir="up" />
          <span className="mb-auto mt-[76px] h-3 w-[10px] bg-[#cdcdcd]" />
          <Arrow dir="down" />
        </div>
      </div>
      <div className="flex h-[15px] shrink-0 items-center bg-gradient-to-r from-[#8f8f8f] to-[#b5b5b5] text-[8px] leading-none text-[#222]">
        <button type="button" className="h-[13px] w-11">Model</button>
        <button type="button" aria-current="page" className="relative h-[13px] w-[38px]">
          <svg viewBox="0 0 38 13" preserveAspectRatio="none" className="absolute inset-0 h-full w-full" aria-hidden="true">
            <path d="M0-1 5 12.500h28L38-1" fill="#c9c9c9" stroke="#555" />
          </svg>
          <span className="relative">布局1</span>
        </button>
        <button type="button" className="h-[13px] w-10">布局2</button>
        <div className="ml-auto mr-[5px]"><Chevron label="布局列表" /></div>
        <div className="flex h-full w-[150px] items-center bg-[#f0f0f0] px-0.5">
          <Arrow dir="left" />
          <span className="ml-[37px] h-full w-3 bg-[#cdcdcd]" />
          <span className="ml-auto flex"><Arrow dir="right" /></span>
        </div>
        <span className="h-full w-3 bg-[#909090]" />
      </div>
    </main>
  );
}

function Watermark() {
  return (
    <div className="absolute bottom-0 right-0 flex h-[71px] w-[150px] items-center gap-1.5 bg-[#212f55] pl-2 text-[#cfd0d3]">
      <svg viewBox="0 0 34 46" className="h-[46px] w-[34px] shrink-0" aria-hidden="true">
        <path d="M3 7 8 10c1-2 4-1 5 0l2 2-2 2c0 6 2 11 8 12 3 0 6 1 7 4 1 4-1 5 0 8l2 7h-3l-3-8-2-5c-3 2-6 1-8 1l-1 6-1 6H9l2-7-1-7c-5-3-9-8-7-13 1-3 3-4 3-6L3 14l1-3z" fill="currentColor" />
        <path d="M12 10C8 8 9 4 8 2M11 7c0-3 1-5 2-6M12 8c4-1 4-4 5-7M13 10c6 2 14 0 20-7M19 9c-1-2 2-5 3-7M24 8c3 0 5-1 7-1" stroke="currentColor" strokeWidth="1.300" fill="none" />
      </svg>
      <div className="font-[Inter,'Noto_Sans_CJK_SC',sans-serif] font-medium">
        <p className="whitespace-nowrap text-[21px] leading-[26px]">3D溜溜网</p>
        <p className="whitespace-nowrap text-[17px] leading-[18px]">3D66.COM</p>
      </div>
    </div>
  );
}

export default function App() {
  return (
    <div className="relative flex h-screen overflow-hidden bg-black font-['Noto_Sans','Noto_Sans_CJK_SC',sans-serif]">
      <div className="w-[3px] shrink-0 border-r-2 border-black bg-gradient-to-b from-black via-[#7c8010] to-[#b08060]" />
      <div className="flex min-w-0 flex-1 flex-col">
        <TitleBar />
        <MenuTabs />
        <Ribbon />
        <div className="flex h-[19px] shrink-0 items-end bg-gradient-to-r from-[#929292] to-[#b6b6b6] pl-[3px] pr-1">
          <div className="flex h-[15px] items-center gap-1.5 border border-b-0 border-[#e0e0e0] bg-[#a9a9a9] pl-1 pr-0.5 text-[8px] leading-none text-[#111]">
            <span className="whitespace-nowrap">两套-1.8米床立体图.dxf</span>
            <button type="button" aria-label="关闭标签" className="flex h-[11px] w-[13px] items-center justify-center rounded-[2px] border border-[#777] bg-[#96938a]">
              <svg viewBox="0 0 6 6" className="h-1.5 w-1.5" aria-hidden="true">
                <path d="m0 0 6 6M6 0 0 6" stroke="#fffbe6" strokeWidth="2" />
              </svg>
            </button>
          </div>
          <div className="mb-0.5 ml-auto"><Chevron label="文件列表" /></div>
        </div>
        <div className="flex min-h-0 flex-1">
          <SidePanels />
          <Workspace />
        </div>
        <section aria-label="命令行" className="flex shrink-0 flex-col border-t-4 border-[#ececec] text-[9px] leading-none text-[#1b1b1b]">
          <PanelHead title="命令行" />
          <div className="h-[41px] border-t border-[#c4c7cc] bg-white" />
          <div className="flex h-[16px] border-t border-[#555] bg-[#c9cdd5]">
            <label htmlFor="command" className="flex w-10 shrink-0 items-center pl-[5px]">命令行:</label>
            <input id="command" className="min-w-0 flex-1 border-l border-[#555] bg-white px-1 outline-none" />
          </div>
        </section>
        <footer className="flex h-[11px] shrink-0 items-start overflow-hidden border-t border-[#444] bg-gradient-to-b from-[#a3a3a3] to-[#8c8c8c] text-[8px] leading-[10px] text-[#111]">
          <span className="w-[177px] shrink-0 border-r border-[#ccc] pl-1">两套-1.8米床立体图.dxf</span>
          <span className="w-[67px] shrink-0 pl-1">11/14</span>
          <span className="flex w-[56px] shrink-0 gap-[2px] border-r border-[#ccc] pl-[2px]">
            <Svg size="w-[12px] h-[12px]">
              <circle cx="7" cy="6" r="4.500" fill="#aecdf0" stroke="#d33" strokeWidth="2" />
              <path d="M7 6h5v6H7z" fill="#2f9e34" />
            </Svg>
            <Svg size="w-[12px] h-[12px]">
              <path d="M2 2h11M2 6h11M2 10h11" stroke="#333" strokeWidth="1.300" strokeDasharray="1.500 3" />
            </Svg>
            <Svg size="w-[12px] h-[12px]">
              <path d="M7 1v9M2 10h10" stroke="#2363c4" strokeWidth="1.300" />
            </Svg>
            <Svg size="w-[12px] h-[12px]">
              <circle cx="6" cy="6" r="4" fill="#eef" stroke="#2474dc" strokeWidth="1.500" />
              <path d="m3 8 2 3 8-10M7 7h7" stroke="#1c8430" strokeWidth="1.500" />
            </Svg>
          </span>
          <span className="whitespace-nowrap pl-1">(339.138; 413.0211; 0)</span>
        </footer>
      </div>
      <div className="w-0.5 shrink-0 bg-black" />
      <Watermark />
    </div>
  );
}
